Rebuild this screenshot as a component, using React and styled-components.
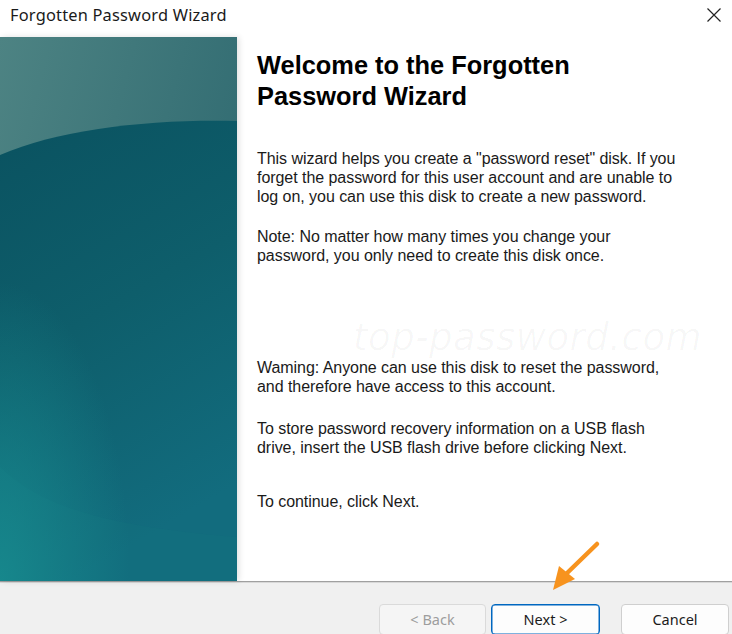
import React from "react";
import styled, { createGlobalStyle } from "styled-components";

const Global = createGlobalStyle`
  html, body { margin: 0; padding: 0; background: #ffffff; }
  body { width: 732px; height: 634px; overflow: hidden; }
  #root { width: 732px; height: 634px; }
`;

const Window = styled.div`
  position: relative;
  width: 732px;
  height: 634px;
  display: flex;
  flex-direction: column;
  background: #ffffff;
  overflow: hidden;
`;

const TitleBar = styled.div`
  height: 37px;
  flex: 0 0 37px;
  display: flex;
  align-items: center;
  justify-content: space-between;
  padding: 0 8px 0 10px;
  box-sizing: border-box;
`;

const Title = styled.div`
  font-family: "Noto Sans", "Open Sans", sans-serif;
  font-size: 16.4px;
  color: #1a1a1a;
  margin-top: -9px;
  letter-spacing: 0.2px;
`;

const CloseBtn = styled.div`
  width: 20px;
  height: 20px;
  display: flex;
  align-items: center;
  justify-content: center;
  margin-top: -8px;
`;

const Body = styled.div`
  flex: 0 0 544px;
  display: flex;
`;

const SidePanel = styled.div`
  width: 237px;
  flex: 0 0 237px;
  height: 100%;
  position: relative;
  box-shadow: 2px 0 6px rgba(0, 0, 0, 0.12);
`;

const PanelArt = styled.svg`
  display: block;
  width: 100%;
  height: 100%;
`;

const Content = styled.div`
  flex: 1;
  position: relative;
  padding: 13px 20px 0 20px;
  box-sizing: border-box;
`;

const Heading = styled.h1`
  margin: 0;
  font-family: "Liberation Sans", Arial, sans-serif;
  font-weight: bold;
  font-size: 25.4px;
  line-height: 31px;
  color: #000000;
`;

const Para = styled.p`
  margin: ${(p) => p.$top}px 0 0 0;
  font-family: "Liberation Sans", Arial, sans-serif;
  font-size: 16px;
  line-height: 19px;
  color: #1a1a1a;
  letter-spacing: -0.05px;
  white-space: nowrap;
`;

const Watermark = styled.div`
  position: absolute;
  left: 116px;
  top: 284px;
  font-family: "DejaVu Sans", sans-serif;
  font-style: italic;
  font-size: 37px;
  line-height: 34px;
  color: rgba(0, 0, 0, 0.03);
  letter-spacing: 0.5px;
  pointer-events: none;
  white-space: nowrap;
`;

const Footer = styled.div`
  flex: 1;
  background: #f0f0f0;
  border-top: 1px solid #a0a0a0;
  box-shadow: inset 0 1px 0 #d8d8d8;
  display: flex;
  justify-content: flex-end;
  align-items: flex-start;
  padding: 22px 3px 0 0;
  box-sizing: border-box;
  gap: 5px;
`;

const Button = styled.button`
  width: ${(p) => p.$w}px;
  height: 31px;
  margin-left: ${(p) => p.$ml || 0}px;
  box-sizing: border-box;
  border-radius: 4px;
  border: 1px solid ${(p) => (p.$primary ? "#0067c0" : p.disabled ? "#dadada" : "#cfcfcf")};
  box-shadow: ${(p) => (p.$primary ? "inset 0 0 0 0.5px #0067c0" : "none")};
  background: ${(p) => (p.disabled ? "#f5f5f5" : "#fdfdfd")};
  color: ${(p) => (p.disabled ? "#9d9d9d" : "#1b1b1b")};
  font-family: "Noto Sans", "Open Sans", sans-serif;
  font-size: 14.5px;
  padding: 0 0 2px 0;
  display: flex;
  align-items: center;
  justify-content: center;
`;

const Arrow = styled.svg`
  position: absolute;
  left: 540px;
  top: 538px;
  pointer-events: none;
`;

export default function App() {
  return (
    <>
      <Global />
      <Window>
        <TitleBar>
          <Title>Forgotten Password Wizard</Title>
          <CloseBtn>
            <svg width="16" height="16" viewBox="0 0 16 16">
              <path d="M1.5 1.5 L14.5 14.5 M14.5 1.5 L1.5 14.5" stroke="#222" strokeWidth="1.2" />
            </svg>
          </CloseBtn>
        </TitleBar>
        <Body>
          <SidePanel>
            <PanelArt viewBox="0 0 237 544" preserveAspectRatio="none">
              <defs>
                <linearGradient id="topg" x1="0" y1="0" x2="1" y2="0.6">
                  <stop offset="0" stopColor="#4d8383" />
                  <stop offset="1" stopColor="#2e6970" />
                </linearGradient>
                <linearGradient id="darkg" x1="0" y1="0" x2="0.3" y2="1">
                  <stop offset="0" stopColor="#0a5260" />
                  <stop offset="0.5" stopColor="#0e5e6b" />
                  <stop offset="1" stopColor="#126c7e" />
                </linearGradient>
                <radialGradient id="blg" cx="0" cy="1" r="0.55">
                  <stop offset="0" stopColor="#178a8e" stopOpacity="0.9" />
                  <stop offset="1" stopColor="#178a8e" stopOpacity="0" />
                </radialGradient>
              </defs>
              <rect x="0" y="0" width="237" height="544" fill="url(#topg)" />
              <path d="M0 118 C 60 92, 150 82, 237 84 L237 544 L0 544 Z" fill="url(#darkg)" />
              <path d="M0 430 C 40 470, 110 490, 237 500 L237 544 L0 544 Z" fill="#14727f" opacity="0.35" />
              <rect x="0" y="0" width="237" height="544" fill="url(#blg)" />
            </PanelArt>
          </SidePanel>
          <Content>
            <Heading>
              Welcome to the Forgotten
              <br />
              Password Wizard
            </Heading>
            <Para $top={37}>
              This wizard helps you create a "password reset" disk. If you
              <br />
              forget the password for this user account and are unable to
              <br />
              log on, you can use this disk to create a new password.
            </Para>
            <Para $top={21}>
              Note: No matter how many times you change your
              <br />
              password, you only need to create this disk once.
            </Para>
            <Para $top={93}>
              Waming: Anyone can use this disk to reset the password,
              <br />
              and therefore have access to this account.
            </Para>
            <Para $top={23}>
              To store password recovery information on a USB flash
              <br />
              drive, insert the USB flash drive before clicking Next.
            </Para>
            <Para $top={35}>To continue, click Next.</Para>
            <Watermark>top-password.com</Watermark>
          </Content>
        </Body>
        <Footer>
          <Button $w={107} disabled>&lt; Back</Button>
          <Button $w={109} $primary>Next &gt;</Button>
          <Button $w={108} $ml={16}>Cancel</Button>
        </Footer>
        <Arrow width="70" height="60" viewBox="0 0 70 60">
          <path d="M57 6 L24 38" stroke="#f7931e" strokeWidth="4.5" strokeLinecap="round" />
          <path d="M13 52 L19 28 L35 41 Z" fill="#f7931e" />
        </Arrow>
      </Window>
    </>
  );
}
